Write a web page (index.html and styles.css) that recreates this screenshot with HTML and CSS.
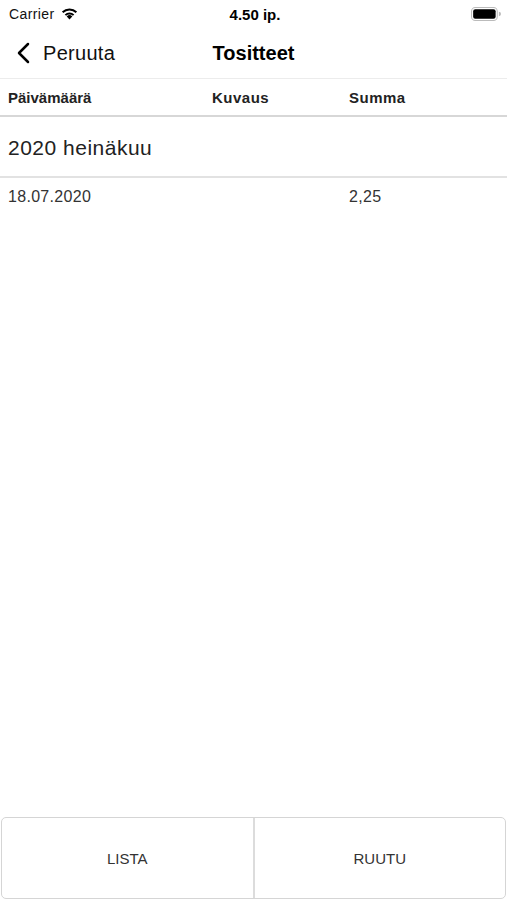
FILE: index.html
```html
<!DOCTYPE html>
<html>
<head>
<meta charset="utf-8">
<link rel="stylesheet" href="styles.css">
</head>
<body>
<div class="screen">
  <div class="status">
    <div class="status-left">
      <span class="carrier">Carrier</span>
      <svg class="wifi" width="19" height="14" viewBox="0 0 16 12">
        <path d="M8 11.5 L5.6 9 A3.4 3.4 0 0 1 10.4 9 Z" fill="#000"/>
        <path d="M3.9 7.2 A5.9 5.9 0 0 1 12.1 7.2 L10.9 8.4 A4.2 4.2 0 0 0 5.1 8.4 Z" fill="#000"/>
        <path d="M1.5 4.8 A9.3 9.3 0 0 1 14.5 4.8 L13.3 6 A7.6 7.6 0 0 0 2.7 6 Z" fill="#000"/>
      </svg>
    </div>
    <div class="time">4.50 ip.</div>
    <div class="status-right">
      <svg width="30" height="14" viewBox="0 0 28 13">
        <rect x="0.5" y="0.5" width="24" height="12" rx="3.5" fill="none" stroke="#bbb"/>
        <rect x="2" y="2" width="21" height="9" rx="2" fill="#000"/>
        <path d="M26 4.5 A2 2 0 0 1 26 8.5 Z" fill="#bbb"/>
      </svg>
    </div>
  </div>
  <div class="nav">
    <div class="back">
      <svg width="15" height="22" viewBox="0 0 15 22">
        <path d="M12 2 L3 11 L12 20" fill="none" stroke="#000" stroke-width="2.5" stroke-linecap="round" stroke-linejoin="round"/>
      </svg>
      <span>Peruuta</span>
    </div>
    <div class="title">Tositteet</div>
  </div>
  <div class="thead">
    <div class="c1">Päivämäärä</div>
    <div class="c2">Kuvaus</div>
    <div class="c3">Summa</div>
  </div>
  <div class="section">2020 heinäkuu</div>
  <div class="row">
    <div class="c1">18.07.2020</div>
    <div class="c2"></div>
    <div class="c3">2,25</div>
  </div>
  <div class="spacer"></div>
  <div class="tabs">
    <div class="tab">LISTA</div>
    <div class="tab">RUUTU</div>
  </div>
</div>
</body>
</html>
```

FILE: styles.css
```css
html, body {
  margin: 0;
  padding: 0;
  background: #fff;
}
body {
  font-family: "Liberation Sans", Arial, sans-serif;
  color: #000;
}
.screen {
  width: 507px;
  height: 900px;
  display: flex;
  flex-direction: column;
}
.status {
  height: 28px;
  display: flex;
  align-items: center;
  padding: 0 6px 0 9px;
}
.status-left {
  display: flex;
  align-items: center;
  gap: 5px;
  flex: 1;
}
.carrier {
  font-size: 14px;
  letter-spacing: 0.4px;
  color: #111;
}
.wifi { margin-top: -3px; }
.time {
  font-size: 15px;
  font-weight: bold;
  flex: 1;
  text-align: center;
}
.status-right {
  flex: 1;
  display: flex;
  justify-content: flex-end;
}
.nav {
  height: 50px;
  display: flex;
  align-items: center;
  position: relative;
}
.back {
  display: flex;
  align-items: center;
  gap: 12px;
  padding-left: 16px;
  font-size: 20px;
  letter-spacing: 0.3px;
  color: #111;
  flex: 1;
}
.title {
  position: absolute;
  left: 0;
  right: 0;
  text-align: center;
  font-size: 20px;
  font-weight: bold;
  pointer-events: none;
}
.thead, .row {
  display: flex;
  align-items: center;
  padding-left: 8px;
}
.thead {
  height: 36px;
  border-top: 1px solid #ececec;
  border-bottom: 2px solid #d7d7d7;
  font-size: 15px;
  font-weight: bold;
  color: #222;
}
.thead .c2, .thead .c3 { letter-spacing: 0.5px; }
.c1 { width: 204px; }
.c2 { width: 137px; }
.c3 { flex: 1; }
.section {
  height: 61px;
  display: flex;
  align-items: center;
  padding-left: 8px;
  padding-top: 2px;
  box-sizing: border-box;
  font-size: 21px;
  letter-spacing: 0.5px;
  color: #222;
  border-bottom: 2px solid #e2e2e2;
}
.row {
  height: 38px;
  font-size: 16px;
  letter-spacing: 0.3px;
  color: #333;
}
.spacer { flex: 1; }
.tabs {
  display: flex;
  margin: 0 1px 1px 1px;
  height: 80px;
  border: 1px solid #d5d5d5;
  border-radius: 5px;
}
.tab {
  flex: 1;
  display: flex;
  align-items: center;
  justify-content: center;
  font-size: 15px;
  color: #333;
}
.tab + .tab {
  border-left: 2px solid #dcdcdc;
}
```
